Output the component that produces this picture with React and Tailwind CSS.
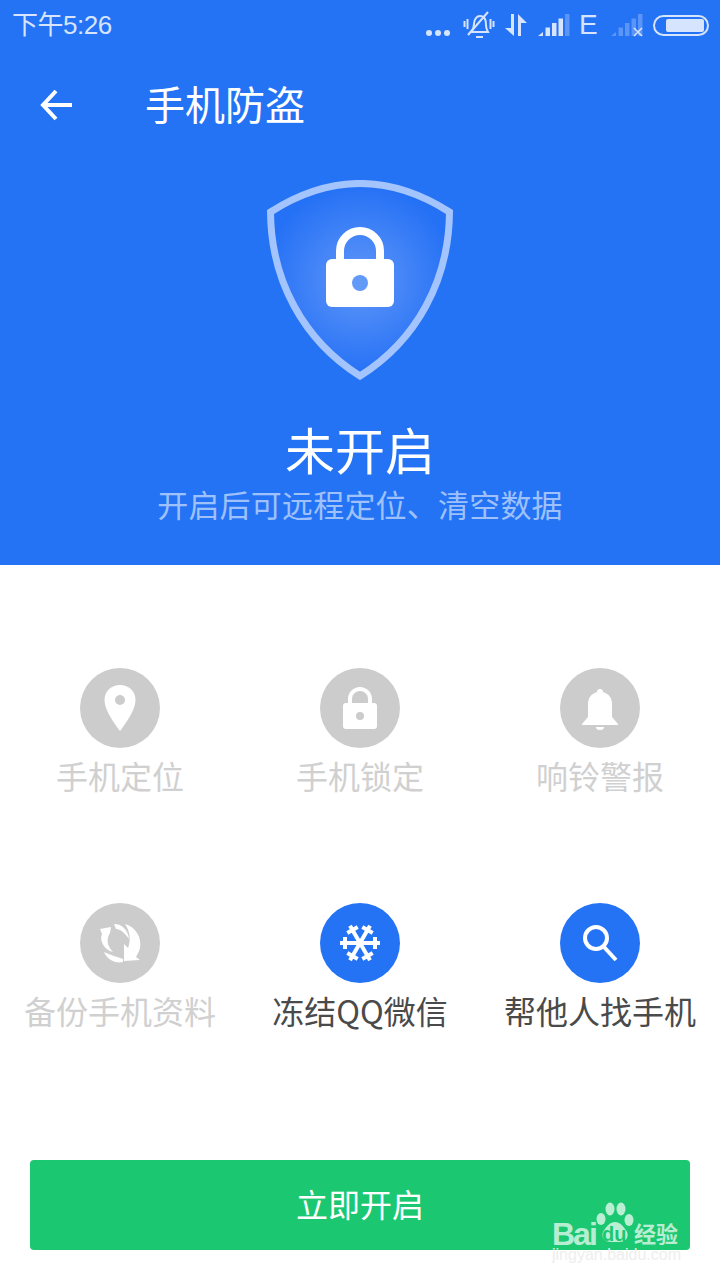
import React from 'react';

const CJK = "font-['Noto_Sans_CJK_SC','Noto_Sans',sans-serif]";

function Signal({ bars, x = false }) {
  return (
    <svg width="34" height="24" viewBox="0 0 34 24">
      {bars.map((op, i) => (
        <path
          key={i}
          d={i === 0 ? 'M1 23 L6 23 L6 19 Z' : `M${2 + i * 6.5} ${23} h4.500 V${19 - i * 4.5} h-4.500 Z`}
          fill="#d6e4fd"
          opacity={op}
        />
      ))}
      {x && <path d="M24 15 L32 23 M32 15 L24 23" stroke="#d6e4fd" strokeWidth="1.6" />}
    </svg>
  );
}

function StatusBar() {
  return (
    <div className="h-[50px] flex items-center justify-between pl-3 pr-[11px] text-[#d6e4fd]">
      <span className="font-['Liberation_Sans','Noto_Sans_CJK_SC',sans-serif] text-[26px] leading-[50px] tracking-[-0.5px]">下午5:26</span>
      <div className="flex items-center">
        <svg width="28" height="8" viewBox="0 0 28 8" className="mt-[16px]">
          <circle cx="4" cy="4" r="3" fill="#d6e4fd" />
          <circle cx="13" cy="4" r="3" fill="#d6e4fd" />
          <circle cx="22" cy="4" r="3" fill="#d6e4fd" />
        </svg>
        {/* muted bell */}
        <svg width="32" height="28" viewBox="0 0 32 28" fill="none" stroke="#d6e4fd" strokeWidth="2" className="ml-[10px]">
          <path d="M1.500 10v6 M4.500 8v10 M27.500 8v10 M30.500 10v6" />
          <path d="M8 21c2-2 3-4 3-8 0-5 3-8 6-8 2 0 4 1 5 3 1 2 1 5 1 6 0 4 1 5 2 7z" />
          <path d="M5 24 L25 1" />
          <path d="M13 26h7" />
        </svg>
        {/* data arrows */}
        <svg width="24" height="24" viewBox="0 0 24 24" className="ml-[9px]" fill="#d6e4fd">
          <path d="M7 1h3v22L1 15h6z" />
          <path d="M14 1l9 9h-6v13h-3z" />
        </svg>
        <div className="ml-[9px]"><Signal bars={[1, 1, 1, 1, 0.3]} /></div>
        <span className="font-['Liberation_Sans',sans-serif] text-[28px] leading-none ml-[8px] w-[26px]">E</span>
        <div className="ml-[5px]"><Signal bars={[0.3, 0.3, 0.3, 0.3, 0.3]} x /></div>
        <div className="ml-[9px] w-[56px] h-[21px] rounded-full border-2 border-[#d6e4fd] flex items-center justify-end pr-[3px]">
          <div className="w-[38px] h-[13px] rounded-[2px] bg-[#d6e4fd]" />
        </div>
      </div>
    </div>
  );
}

function Shield() {
  return (
    <svg width="186" height="200" viewBox="0 0 186 200">
      <defs>
        <radialGradient id="glow" gradientUnits="userSpaceOnUse" cx="93" cy="100" r="95">
          <stop offset="0" stopColor="#6096f9" />
          <stop offset="1" stopColor="#2571f5" />
        </radialGradient>
      </defs>
      <path
        d="M3.500 32 Q93 -25 182.500 32 C182 100 150 160 93 196 C36 160 4 100 3.500 32 Z"
        fill="url(#glow)"
        stroke="#a3c4fc"
        strokeWidth="7"
      />
      <path d="M73 85 V71 a20 20 0 0 1 40 0 V85" fill="none" stroke="#fff" strokeWidth="8" />
      <rect x="59" y="79" width="68" height="48" rx="6" fill="#fff" />
      <circle cx="93" cy="103" r="8" fill="#639af8" />
    </svg>
  );
}

const snowArm = (
  <>
    <path d="M-20 0H20" strokeWidth="4" />
    <path d="M-15 -6V6 M15 -6V6" strokeWidth="4" />
  </>
);

const icons = {
  pin: (
    <svg width="32" height="46" viewBox="0 0 32 46">
      <path fillRule="evenodd" d="M16 0C7 0 .500 6.500.500 15c0 9 8 21 15.500 31C23.500 36 31.500 24 31.500 15 31.500 6.500 25 0 16 0zm0 10a5 5 0 1 1 0 10 5 5 0 0 1 0-10z" fill="#fff" />
    </svg>
  ),
  lock: (
    <svg width="36" height="42" viewBox="0 0 36 42">
      <path d="M8 18V12a10 10 0 0 1 20 0v6" fill="none" stroke="#fff" strokeWidth="4" />
      <path fillRule="evenodd" d="M4 16h28a3 3 0 0 1 3 3v20a3 3 0 0 1-3 3H4a3 3 0 0 1-3-3V19a3 3 0 0 1 3-3zm14 9a4 4 0 1 0 0 8 4 4 0 0 0 0-8z" fill="#fff" />
    </svg>
  ),
  bell: (
    <svg width="38" height="44" viewBox="0 0 38 44" fill="#fff">
      <path d="M16 6a3 3 0 0 1 6 0c6 2 9 6 9 12v13l6 7v1H1v-1l6-7V18c0-6 3-10 9-12z" />
      <path d="M15 41h8a4 3 0 0 1-8 0z" />
    </svg>
  ),
  sync: (
    <svg width="44" height="42" viewBox="0 0 44 42" fill="#fff">
      <path d="M2 7L13 5L12 11C8 17 9 24 15 30C6 28 1 18 4 12Z" />
      <path d="M16 2C24 2 30 8 31 17C27 11 22 7 18 7Z" />
      <path d="M27 2C38 5 44 16 42 26C41 30 39 33 38 35L42 38L26 39L26 22L30 26C33 18 32 9 27 2Z" />
      <path d="M6 30C12 33 20 35 25 37L25 40C17 42 9 37 6 30Z" />
    </svg>
  ),
  snow: (
    <svg width="40" height="40" viewBox="-20 -20 40 40" stroke="#fff" fill="none">
      {snowArm}
      <g transform="rotate(60)">{snowArm}</g>
      <g transform="rotate(120)">{snowArm}</g>
    </svg>
  ),
  search: (
    <svg width="36" height="38" viewBox="0 0 36 38" fill="none" stroke="#fff">
      <circle cx="14" cy="14" r="11" strokeWidth="4" />
      <path d="M22 23L34 36" strokeWidth="4" />
    </svg>
  ),
};

const features = [
  { label: '手机定位', icon: 'pin', active: false },
  { label: '手机锁定', icon: 'lock', active: false },
  { label: '响铃警报', icon: 'bell', active: false },
  { label: '备份手机资料', icon: 'sync', active: false },
  { label: '冻结QQ微信', icon: 'snow', active: true },
  { label: '帮他人找手机', icon: 'search', active: true },
];

function Feature({ item }) {
  return (
    <div className="flex flex-col items-center">
      <div className={`w-20 h-20 rounded-full flex items-center justify-center ${item.active ? 'bg-[#2473f5]' : 'bg-[#cccccc]'}`}>
        {icons[item.icon]}
      </div>
      <div className={`mt-[5px] text-[32px] leading-[44px] whitespace-nowrap ${item.active ? 'text-[#4a4a4a]' : 'text-[#d0d0d0]'}`}>
        {item.label}
      </div>
    </div>
  );
}

export default function App() {
  return (
    <div className={`relative w-[720px] h-[1280px] overflow-hidden bg-white ${CJK}`}>
      {/* Blue header */}
      <div className="h-[565px] bg-[#2473f5]">
        <StatusBar />
        <div className="h-[110px] flex items-center pl-10">
          <svg width="32" height="32" viewBox="0 0 32 32" fill="none" stroke="#fff" strokeWidth="4">
            <path d="M32 16H3 M16 2L3 16l13 14" />
          </svg>
          <span className="ml-[73px] -mt-1 text-[40px] leading-none text-white">手机防盗</span>
        </div>
        <div className="flex flex-col items-center pt-5">
          <Shield />
          <div className="mt-[37px] text-[50px] leading-[62px] text-white">未开启</div>
          <div className="text-[31px] leading-[48px] mt-[1px] tracking-[0.2px] text-[#9ec1fb]">开启后可远程定位、清空数据</div>
        </div>
      </div>

      {/* Feature grid */}
      <div className="grid grid-cols-3 gap-y-[106px] pt-[103px]">
        {features.map((item) => (
          <Feature key={item.label} item={item} />
        ))}
      </div>

      <div className="mx-[30px] mt-[128px] h-[90px] rounded-[4px] bg-[#1bc871] flex items-center justify-center pb-1 text-[32px] text-white">
        立即开启
      </div>

      {/* Baidu watermark */}
      <div className="absolute left-[552px] top-[1202px] w-[130px] h-[66px] text-white/70">
        <svg width="40" height="44" viewBox="0 0 40 44" className="absolute left-[43px] top-0" fill="#fff" fillOpacity="0.7">
          <ellipse cx="6" cy="17" rx="4.500" ry="6" />
          <ellipse cx="15" cy="7" rx="4.500" ry="6.500" />
          <ellipse cx="26" cy="7" rx="4.500" ry="6.500" />
          <ellipse cx="34" cy="18" rx="4.500" ry="6" />
          <path d="M20 20c5 0 8 4 10 7 3 3 3 6 2 9-2 4-6 4-12 4s-10 0-12-4c-1-3-1-6 2-9 2-3 5-7 10-7z" />
        </svg>
        <span className="absolute left-0 top-[19px] font-['Liberation_Sans',sans-serif] font-bold text-[32px] leading-[26px] tracking-[-2px]">Bai</span>
        <span className="absolute left-[50px] top-[20px] font-['Liberation_Sans',sans-serif] font-bold text-[20px] leading-[24px] text-[#1bc871]">du</span>
        <span className="absolute left-[82px] top-[16px] text-[22px] leading-[28px] font-bold">经验</span>
        <span className="absolute left-0 top-[46px] font-['Liberation_Sans',sans-serif] text-[16px] leading-[14px] text-[#eeeeee] whitespace-nowrap">jingyan.baidu.com</span>
      </div>
    </div>
  );
}
